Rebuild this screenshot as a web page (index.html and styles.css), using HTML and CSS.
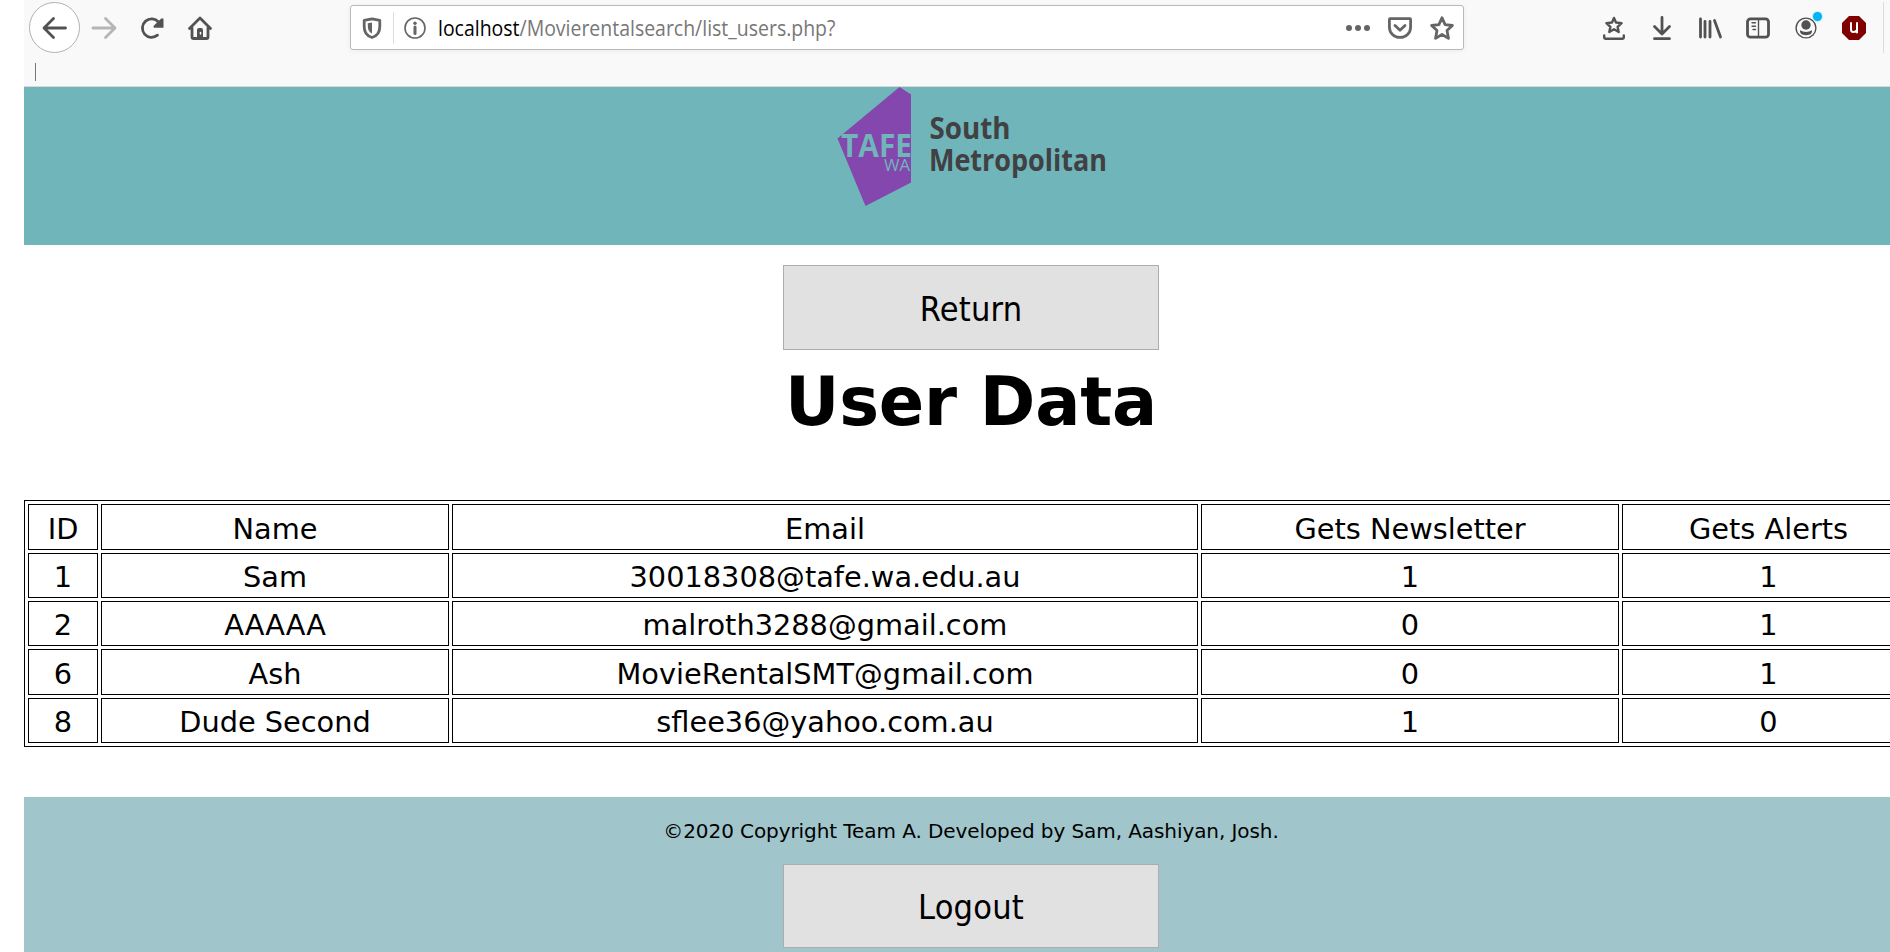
FILE: index.html
```html
<!DOCTYPE html>
<html lang="en">
<head>
<meta charset="utf-8">
<title>User Data</title>
<link rel="stylesheet" href="styles.css">
</head>
<body>
<div class="window">
  <nav class="toolbar">
    <div class="nav-buttons">
      <span class="back"><svg class="icon" viewBox="0 0 24 24"><path d="M22.500 12H1.500M10.500 2.500 1 12l9.500 9.500"/></svg></span>
      <svg class="icon forward" viewBox="0 0 24 24"><path d="M1 12h21.500M13.500 2.500 23 12l-9.500 9.500"/></svg>
      <svg class="icon reload" viewBox="0 0 24 24"><path d="M17.500 19.200A9.200 9.200 0 1 1 18.500 6"/><path class="solid" d="M23.500 3v8.700H14q-1.200-1 0-2.200L21 2.800Q22.700 1.500 23.500 3z"/></svg>
      <svg class="icon home" viewBox="0 0 24 24"><path d="M1.500 12.500 12 2l10.500 10.500M4 12v9q0 1.500 1.500 1.500h13q1.500 0 1.500-1.500v-9"/><path class="solid" d="M9 23V14q0-2 2-2h2q2 0 2 2v9z"/><path class="door" d="M12.500 16.500v1.500"/></svg>
    </div>
    <div class="urlbar">
      <svg class="icon shield" viewBox="0 0 24 24"><path d="M12 2.800 19.800 4.300v6.200c0 5.600-3 9.600-7.800 11-4.800-1.400-7.800-5.400-7.800-11V4.300z"/><path class="solid" d="M12 6.500v11C9 16 7.800 13.500 7.800 10V7.300z"/></svg>
      <span class="divider"></span>
      <svg class="icon info" viewBox="0 0 24 24"><circle cx="12" cy="12" r="10"/><path class="stem" d="M12 11v6.500"/><circle class="solid" cx="12" cy="7.300" r="1.700"/></svg>
      <span class="url"><span class="host">localhost</span>/Movierentalsearch/list_users.php?</span>
      <div class="page-actions">
        <svg class="icon" viewBox="0 0 24 24"><g class="solid"><circle cx="3" cy="12" r="3"/><circle cx="12" cy="12" r="3"/><circle cx="21" cy="12" r="3"/></g></svg>
        <svg class="icon" viewBox="0 0 24 24"><path d="M2 2.700h20q.6 0 .6.800V11c0 6-4.600 10.400-10.600 10.400S1.400 17 1.400 11V3.500q0-.8.6-.8z"/><path d="m7 9.500 5 4.800 5-4.800"/></svg>
        <svg class="icon" viewBox="0 0 24 24"><path d="m12 1.800 3.100 6.800 7.300.9-5.400 5 1.500 7.900-6.500-3.900-6.500 3.900L7 14.500l-5.400-5 7.300-.9z"/></svg>
      </div>
    </div>
    <div class="tools">
      <svg class="icon" viewBox="0 0 24 24"><path class="tray" d="M2.200 19.500v2q0 1.200 1.200 1.200h17.200q1.200 0 1.200-1.200v-2"/><path class="thin" d="m12 1.900 2 4.600 5.600.6-4 3.700 1.100 5.200L12 13.200l-4.700 2.800 1.100-5.200-4-3.700 5.600-.6z"/></svg>
      <svg class="icon" viewBox="0 0 24 24"><path d="M12 1.500V17M4.500 10.500 12 18l7.500-7.500M4.500 22.700h15"/></svg>
      <svg class="icon library" viewBox="0 0 24 24"><path d="M2.500 2.800V21M7 5.500V21M12 5.500V21M16.500 4.500 22.500 21"/></svg>
      <svg class="icon" viewBox="0 0 24 24"><rect x="1.500" y="2.800" width="21" height="18.400" rx="3"/><path class="line" d="M12.500 3v18M6 6.800h3.500M6 10.200h3.500M7 13.500h2.500"/></svg>
      <span class="account"><svg class="icon" viewBox="0 0 24 24"><circle class="line" cx="12" cy="12" r="9.900"/><g class="solid"><circle cx="12" cy="9" r="4.700"/><path d="M6 14.200q6 3.600 12 0 .8 4.800-6 5-6.800-.2-6-5z"/></g></svg><span class="badge"></span></span>
      <svg class="icon ublock" viewBox="0 0 24 24"><path class="octagon" d="M7 0h10l7 7v10l-7 7H7l-7-7V7z"/><path class="mark" d="M9 7v6.500q0 2.500 2.500 2.500T15 14V7v9.500"/></svg>
    </div>
    <span class="edge"></span>
  </nav>
  <div class="bookmarks"><span class="caret"></span></div>

  <header class="banner">
    <svg class="logo" viewBox="0 0 274 120">
      <path class="shape" d="M1.500 51.500 63.500 0 75 7.500v88L29.500 119z"/>
      <text class="tafe" x="5" y="70" textLength="71" lengthAdjust="spacingAndGlyphs">TAFE</text>
      <text class="wa" x="48" y="84" textLength="26" lengthAdjust="spacingAndGlyphs">WA</text>
      <text class="name" x="93.500" y="51.500" textLength="81" lengthAdjust="spacingAndGlyphs">South</text>
      <text class="name" x="93" y="84" textLength="178" lengthAdjust="spacingAndGlyphs">Metropolitan</text>
    </svg>
  </header>

  <main class="content">
    <button class="button">Return</button>
    <h1 class="title">User Data</h1>
    <table class="users">
      <colgroup><col class="col-id"><col class="col-name"><col class="col-email"><col class="col-news"><col class="col-alerts"></colgroup>
      <tr class="tall"><td>ID</td><td>Name</td><td>Email</td><td>Gets Newsletter</td><td>Gets Alerts</td></tr>
      <tr><td>1</td><td>Sam</td><td>30018308@tafe.wa.edu.au</td><td>1</td><td>1</td></tr>
      <tr><td>2</td><td>AAAAA</td><td>malroth3288@gmail.com</td><td>0</td><td>1</td></tr>
      <tr class="tall"><td>6</td><td>Ash</td><td>MovieRentalSMT@gmail.com</td><td>0</td><td>1</td></tr>
      <tr><td>8</td><td>Dude Second</td><td>sflee36@yahoo.com.au</td><td>1</td><td>0</td></tr>
    </table>
  </main>

  <footer class="footer">
    <p class="copyright">©2020 Copyright Team A. Developed by Sam, Aashiyan, Josh.</p>
    <button class="button logout">Logout</button>
  </footer>
</div>
</body>
</html>
```
FILE: styles.css
```css
* { box-sizing: border-box; }
html, body { margin: 0; height: 952px; overflow: hidden; background: #fff; }
body { font-family: Verdana, "DejaVu Sans", sans-serif; color: #000; }
.window { width: 1894px; height: 952px; margin-left: 24px; overflow: hidden; display: flex; flex-direction: column; }

.toolbar { flex: none; height: 55px; width: 1866px; background: #f9f9f9; display: flex; align-items: flex-start; }
.icon { display: block; width: 24px; height: 24px; flex: none; overflow: visible; fill: none; stroke: #525252; stroke-width: 2.800; stroke-linecap: round; stroke-linejoin: round; }
.icon .solid { fill: #525252; stroke: none; }
.icon .line { stroke-width: 1.4; }
.icon .thin { stroke-width: 2.4; }
.icon .tray { stroke-width: 2.4; }
.nav-buttons { width: 326px; height: 55px; padding-left: 5px; display: flex; align-items: center; }
.back { width: 51px; height: 51px; border: 1px solid #b1b1b1; border-radius: 50%; background: #fff; display: flex; align-items: center; justify-content: center; }
.nav-buttons .forward { margin-left: 12px; stroke: #b5b5b5; }
.reload { margin-left: 24px; }
.home { margin-left: 24px; }
.icon .door { stroke: #f9f9f9; stroke-width: 1.5; }

.urlbar { width: 1114px; height: 45px; margin-top: 5px; padding: 0 9px; border: 1px solid #b9b9b9; border-radius: 3px; background: #fff; box-shadow: 0 1px 5px rgba(0,0,0,.06); display: flex; align-items: center; }
.urlbar .icon { stroke: #656565; }
.urlbar .icon .solid { fill: #656565; stroke: none; }
.divider { width: 1px; height: 32px; margin: 0 9px; background: #ddd; }
.urlbar .info { stroke-width: 1.600; }
.info .stem { stroke-width: 3; }
.url { margin-left: 11px; font: 21.500px/30px "Segoe UI", "Open Sans", sans-serif; color: #777; white-space: nowrap; transform: scaleX(.905); transform-origin: left; }
.host { color: #000; }
.page-actions { margin-left: auto; display: flex; gap: 18px; }

.tools { margin-left: 138px; height: 55px; display: flex; align-items: center; gap: 24px; }
.icon.library { stroke-width: 2.800; }
.account { position: relative; }
.badge { position: absolute; left: 19px; top: -4px; width: 9px; height: 9px; border-radius: 50%; background: #00b3f4; box-shadow: 0 0 0 1px #c8effd; }
.ublock .octagon { fill: #800000; stroke: none; }
.ublock .mark { stroke: #fff; stroke-width: 2; }
.edge { margin: 2px 0 0 17px; width: 1px; height: 51px; background: #dcdcdc; }
.bookmarks { flex: none; height: 32px; padding: 8px 0 0 11px; background: #f9f9f9; border-bottom: 1px solid #d8d8d8; }
.caret { display: block; width: 1px; height: 18px; background: #777; }

.banner { flex: none; height: 158px; background: #6fb5ba; display: flex; justify-content: center; align-items: flex-start; }
.logo { width: 274px; height: 120px; margin-left: 4px; font-family: "Open Sans", sans-serif; overflow: visible; }
.shape { fill: #8347ad; }
.tafe { font-size: 32px; font-weight: 700; fill: #6fb5ba; }
.wa { font-size: 16px; fill: #6fb5ba; }
.name { font-size: 30px; font-weight: 700; fill: #414042; }

.content { flex: none; height: 552px; padding-top: 20px; display: flex; flex-direction: column; align-items: center; }
.button { display: block; width: 376px; height: 85px; padding: 2px 0 0; border: 1px solid #adadad; background: #e1e1e1; color: #000; font: 34px/44px Tahoma, "DejaVu Sans Condensed", "DejaVu Sans", sans-serif; font-stretch: condensed; letter-spacing: .2px; }
.logout { height: 84px; }
.title { margin: 11px 0 0; height: 82px; font-size: 67px; line-height: 82px; font-weight: 700; letter-spacing: -.25px; white-space: nowrap; }
.users { flex: none; margin-top: 57px; width: 1895px; table-layout: fixed; border: 1px solid #000; border-spacing: 3px; font-size: 28.800px; line-height: 36px; text-align: center; }
.users td { height: 45px; padding: 3px 0 0 1px; border: 1px solid #000; }
.users .tall td { height: 46px; }
.col-id { width: 70px; }
.col-name { width: 348px; }
.col-email { width: 746px; }
.col-news { width: 418px; }
.col-alerts { width: 293px; }

.footer { flex: none; height: 155px; padding-top: 21px; background: #a0c6cb; display: flex; flex-direction: column; align-items: center; }
.copyright { margin: 0 0 20px; font-size: 20px; line-height: 26px; letter-spacing: -.08px; white-space: nowrap; }
```
